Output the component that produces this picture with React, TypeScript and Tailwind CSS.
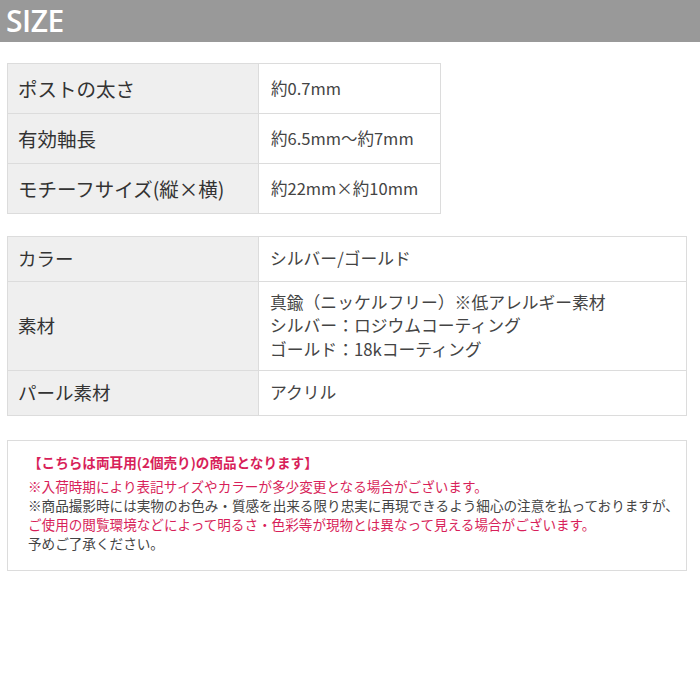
const jp = "font-['Noto_Sans_CJK_JP','Noto_Sans',sans-serif]"

const sizeRows = [
  { label: "ポストの太さ", value: "約0.7mm" },
  { label: "有効軸長", value: "約6.5mm～約7mm" },
  { label: "モチーフサイズ(縦×横)", value: "約22mm×約10mm" },
]

const specRows = [
  { label: "カラー", lines: ["シルバー/ゴールド"], h: "h-[45px]" },
  {
    label: "素材",
    lines: [
      "真鍮（ニッケルフリー）※低アレルギー素材",
      "シルバー：ロジウムコーティング",
      "ゴールド：18kコーティング",
    ],
    h: "h-[89px]",
  },
  { label: "パール素材", lines: ["アクリル"], h: "h-[45px]" },
]

export default function App() {
  return (
    <div className={`min-h-[700px] w-[700px] bg-white ${jp}`}>
      {/* Header bar */}
      <div className="flex h-[42px] items-center bg-[#999999] pl-[6px]">
        <h1 className="font-['Open_Sans',sans-serif] text-[30px] font-semibold leading-none tracking-[-0.5px] text-white">
          SIZE
        </h1>
      </div>

      <div className="px-[7px]">
        {/* Size table */}
        <div className="mt-[21px] grid w-[434px] grid-cols-[251px_182px] border-t border-l border-[#dcdcdc]">
          {sizeRows.map((r) => (
            <div key={r.label} className="contents">
              <div className="flex h-[50px] items-center border-r border-b border-[#dcdcdc] bg-[#efefef] pl-[10px] text-[19.5px] text-[#333]">
                {r.label}
              </div>
              <div className="flex h-[50px] items-center border-r border-b border-[#dcdcdc] pl-[12px] text-[16.5px] text-[#444]">
                {r.value}
              </div>
            </div>
          ))}
        </div>

        {/* Spec table */}
        <div className="mt-[22px] grid w-[680px] grid-cols-[251px_1fr] border-t border-l border-[#dcdcdc]">
          {specRows.map((r) => (
            <div key={r.label} className="contents">
              <div className={`flex ${r.h} items-center border-r border-b border-[#dcdcdc] bg-[#efefef] pl-[10px] text-[18.5px] text-[#333]`}>
                {r.label}
              </div>
              <div className={`flex ${r.h} flex-col justify-center border-r border-b border-[#dcdcdc] pl-[11px] text-[16.8px] leading-[23.5px] text-[#444]`}>
                {r.lines.map((l) => (
                  <p key={l}>{l}</p>
                ))}
              </div>
            </div>
          ))}
        </div>

        {/* Notice */}
        <div className="mt-[24px] h-[131px] w-[680px] border border-[#dcdcdc] pt-[12px] pl-[20px] text-[13.6px] leading-[19px]">
          <p className="mb-[5px] font-bold text-[#d81f5a]">
            【こちらは両耳用(2個売り)の商品となります】
          </p>
          <p className="text-[#d81f5a]">
            ※入荷時期により表記サイズやカラーが多少変更となる場合がございます。
          </p>
          <p className="text-[#444]">
            ※商品撮影時には実物のお色み・質感を出来る限り忠実に再現できるよう細心の注意を払っておりますが、
          </p>
          <p className="text-[#d81f5a]">
            ご使用の閲覧環境などによって明るさ・色彩等が現物とは異なって見える場合がございます。
          </p>
          <p className="text-[#444]">予めご了承ください。</p>
        </div>
      </div>
    </div>
  )
}
